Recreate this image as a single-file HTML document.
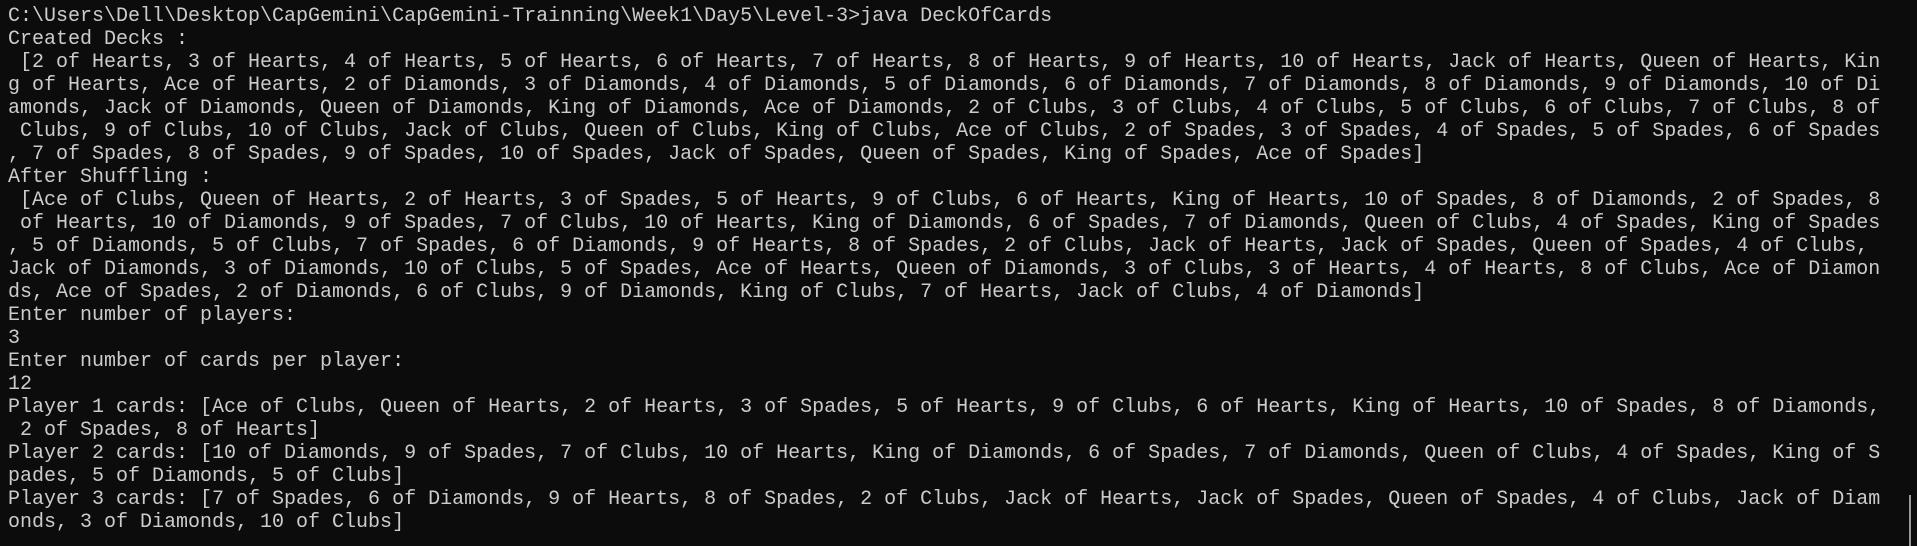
<!DOCTYPE html>
<html><head><meta charset="utf-8"><style>
html,body{margin:0;padding:0;background:#0c0c0c;width:1917px;height:546px;overflow:hidden}
pre{margin:0;position:absolute;left:8px;top:5px;font-family:"Liberation Mono",monospace;font-size:20px;line-height:23px;color:#cccccc}
.sb{position:absolute;left:1909px;top:495px;width:2px;height:51px;background:#9a9a9a}
</style></head><body>
<pre>C:\Users\Dell\Desktop\CapGemini\CapGemini-Trainning\Week1\Day5\Level-3&gt;java DeckOfCards
Created Decks :
 [2 of Hearts, 3 of Hearts, 4 of Hearts, 5 of Hearts, 6 of Hearts, 7 of Hearts, 8 of Hearts, 9 of Hearts, 10 of Hearts, Jack of Hearts, Queen of Hearts, Kin
g of Hearts, Ace of Hearts, 2 of Diamonds, 3 of Diamonds, 4 of Diamonds, 5 of Diamonds, 6 of Diamonds, 7 of Diamonds, 8 of Diamonds, 9 of Diamonds, 10 of Di
amonds, Jack of Diamonds, Queen of Diamonds, King of Diamonds, Ace of Diamonds, 2 of Clubs, 3 of Clubs, 4 of Clubs, 5 of Clubs, 6 of Clubs, 7 of Clubs, 8 of
 Clubs, 9 of Clubs, 10 of Clubs, Jack of Clubs, Queen of Clubs, King of Clubs, Ace of Clubs, 2 of Spades, 3 of Spades, 4 of Spades, 5 of Spades, 6 of Spades
, 7 of Spades, 8 of Spades, 9 of Spades, 10 of Spades, Jack of Spades, Queen of Spades, King of Spades, Ace of Spades]
After Shuffling :
 [Ace of Clubs, Queen of Hearts, 2 of Hearts, 3 of Spades, 5 of Hearts, 9 of Clubs, 6 of Hearts, King of Hearts, 10 of Spades, 8 of Diamonds, 2 of Spades, 8
 of Hearts, 10 of Diamonds, 9 of Spades, 7 of Clubs, 10 of Hearts, King of Diamonds, 6 of Spades, 7 of Diamonds, Queen of Clubs, 4 of Spades, King of Spades
, 5 of Diamonds, 5 of Clubs, 7 of Spades, 6 of Diamonds, 9 of Hearts, 8 of Spades, 2 of Clubs, Jack of Hearts, Jack of Spades, Queen of Spades, 4 of Clubs,
Jack of Diamonds, 3 of Diamonds, 10 of Clubs, 5 of Spades, Ace of Hearts, Queen of Diamonds, 3 of Clubs, 3 of Hearts, 4 of Hearts, 8 of Clubs, Ace of Diamon
ds, Ace of Spades, 2 of Diamonds, 6 of Clubs, 9 of Diamonds, King of Clubs, 7 of Hearts, Jack of Clubs, 4 of Diamonds]
Enter number of players:
3
Enter number of cards per player:
12
Player 1 cards: [Ace of Clubs, Queen of Hearts, 2 of Hearts, 3 of Spades, 5 of Hearts, 9 of Clubs, 6 of Hearts, King of Hearts, 10 of Spades, 8 of Diamonds,
 2 of Spades, 8 of Hearts]
Player 2 cards: [10 of Diamonds, 9 of Spades, 7 of Clubs, 10 of Hearts, King of Diamonds, 6 of Spades, 7 of Diamonds, Queen of Clubs, 4 of Spades, King of S
pades, 5 of Diamonds, 5 of Clubs]
Player 3 cards: [7 of Spades, 6 of Diamonds, 9 of Hearts, 8 of Spades, 2 of Clubs, Jack of Hearts, Jack of Spades, Queen of Spades, 4 of Clubs, Jack of Diam
onds, 3 of Diamonds, 10 of Clubs]</pre>
<div class="sb"></div>
</body></html>
